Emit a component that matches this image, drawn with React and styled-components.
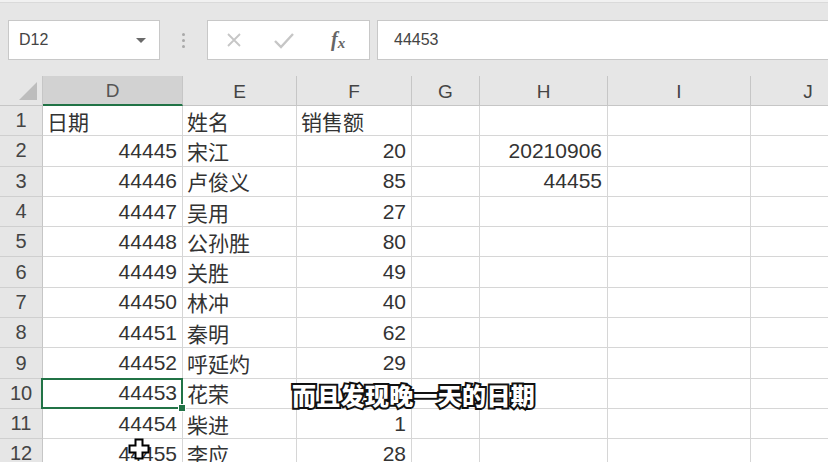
import styled, { createGlobalStyle, css } from "styled-components";

const GlobalStyle = createGlobalStyle`
  html, body {
    margin: 0;
    padding: 0;
    background: #ffffff;
  }
  body {
    font-family: "Liberation Sans", "Noto Sans CJK SC", sans-serif;
    overflow: hidden;
  }
`;

const GREEN = "#217346";
const GRID = "#d6d6d6";

const Page = styled.div`
  width: 828px;
  height: 470px;
  display: flex;
  flex-direction: column;
  background: #ffffff;
  overflow: hidden;
`;

const Toolbar = styled.div`
  height: 76px;
  box-sizing: border-box;
  padding: 18px 0 0 8px;
  display: flex;
  align-items: flex-start;
  background: #e6e6e6;
  border-top: 2px solid #f1f1f1;
  box-shadow: inset 0 1px 0 #dadada;
`;

const NameBox = styled.div`
  width: 152px;
  height: 40px;
  box-sizing: border-box;
  background: #fff;
  border: 1px solid #c8c8c8;
  display: flex;
  align-items: center;
  justify-content: space-between;
  padding: 0 13px 0 10px;
  font-size: 16px;
  color: #444;
`;

const Caret = styled.span`
  width: 0;
  height: 0;
  border-left: 5px solid transparent;
  border-right: 5px solid transparent;
  border-top: 5px solid #6a6a6a;
`;

const Grip = styled.div`
  width: 47px;
  height: 40px;
  display: flex;
  flex-direction: column;
  align-items: center;
  justify-content: center;
  gap: 3px;

  span {
    width: 3px;
    height: 3px;
    border-radius: 50%;
    background: #a9a9a9;
  }
`;

const FxButtons = styled.div`
  width: 163px;
  height: 40px;
  box-sizing: border-box;
  background: #fff;
  border: 1px solid #c8c8c8;
  display: flex;
  align-items: center;
  padding: 0 0 0 17px;
  gap: 30px;
  color: #c3c3c3;
`;

const FxLabel = styled.span`
  font-family: "Liberation Serif", serif;
  font-style: italic;
  font-weight: bold;
  font-size: 20px;
  color: #666;
  margin-left: 6px;

  sub {
    font-size: 15px;
    vertical-align: -2px;
  }
`;

const FormulaInput = styled.div`
  flex: 1;
  margin-left: 7px;
  height: 40px;
  box-sizing: border-box;
  background: #fff;
  border: 1px solid #c8c8c8;
  border-right: none;
  display: flex;
  align-items: center;
  padding-left: 16px;
  font-size: 16px;
  color: #444;
`;

const SheetWrap = styled.div`
  position: relative;
  height: 386px;
  overflow: hidden;
`;

const Sheet = styled.div`
  display: grid;
  grid-template-columns: 43px 140px 114px 115px 68px 128px 143px 115px;
  grid-template-rows: 30px repeat(12, 30.3px);
  font-size: 21px;
  color: #333;
`;

const Corner = styled.div`
  background: #e6e6e6;
  border-right: 1px solid #c6c6c6;
  border-bottom: 1px solid #c6c6c6;
  position: relative;

  &::after {
    content: "";
    position: absolute;
    right: 5px;
    bottom: 5px;
    width: 18px;
    height: 18px;
    background: #bdbdbd;
    clip-path: polygon(100% 0, 100% 100%, 0 100%);
  }
`;

const ColHead = styled.div`
  background: ${({ active }) => (active ? "#d2d2d2" : "#e6e6e6")};
  border-right: 1px solid #c6c6c6;
  border-bottom: ${({ active }) =>
    active ? `2px solid ${GREEN}` : "1px solid #c6c6c6"};
  display: flex;
  align-items: center;
  justify-content: center;
  font-size: 19px;
  color: ${({ active }) => (active ? "#555" : "#444")};
  padding-top: 2px;
  box-sizing: border-box;
`;

const RowHead = styled.div`
  background: #e6e6e6;
  border-right: 1px solid #c6c6c6;
  border-bottom: 1px solid #cfcfcf;
  display: flex;
  align-items: center;
  justify-content: center;
  font-size: 20px;
  color: #444;
  box-sizing: border-box;
`;

const Cell = styled.div`
  border-right: 1px solid ${GRID};
  border-bottom: 1px solid ${GRID};
  display: flex;
  align-items: center;
  justify-content: ${({ num }) => (num ? "flex-end" : "flex-start")};
  padding: ${({ num }) => (num ? "0 5px 0 0" : "0 0 0 4px")};
  box-sizing: border-box;
  white-space: nowrap;
  position: relative;

  ${({ selected }) =>
    selected &&
    css`
      &::after {
        content: "";
        position: absolute;
        left: -2px;
        top: -1px;
        right: -1px;
        bottom: -1px;
        border: 2px solid ${GREEN};
      }
      &::before {
        content: "";
        position: absolute;
        right: -4px;
        bottom: -4px;
        width: 6px;
        height: 6px;
        background: ${GREEN};
        border: 1px solid #fff;
        z-index: 2;
      }
    `}
`;

const Caption = styled.div`
  position: absolute;
  left: 292px;
  top: 305px;
  font-family: "Noto Sans CJK SC", sans-serif;
  font-weight: 900;
  font-size: 24px;
  line-height: 28px;
  letter-spacing: 0.3px;
  color: #fff;
  -webkit-text-stroke: 4px #111;
  paint-order: stroke fill;
`;

const Cursor = styled.svg`
  position: absolute;
  left: 128px;
  top: 362px;
`;

const columns = ["D", "E", "F", "G", "H", "I", "J"];

const rows = [
  ["日期", "姓名", "销售额", "", "", "", ""],
  [44445, "宋江", 20, "", 20210906, "", ""],
  [44446, "卢俊义", 85, "", 44455, "", ""],
  [44447, "吴用", 27, "", "", "", ""],
  [44448, "公孙胜", 80, "", "", "", ""],
  [44449, "关胜", 49, "", "", "", ""],
  [44450, "林冲", 40, "", "", "", ""],
  [44451, "秦明", 62, "", "", "", ""],
  [44452, "呼延灼", 29, "", "", "", ""],
  [44453, "花荣", "", "", "", "", ""],
  [44454, "柴进", 1, "", "", "", ""],
  [44455, "李应", 28, "", "", "", ""],
];

export default function App() {
  return (
    <Page>
      <GlobalStyle />
      <Toolbar>
        <NameBox>
          D12
          <Caret />
        </NameBox>
        <Grip>
          <span />
          <span />
          <span />
        </Grip>
        <FxButtons>
          <svg width="18" height="18" viewBox="0 0 18 18">
            <path d="M3 3 L15 15 M15 3 L3 15" stroke="#c6c6c6" strokeWidth="1.8" fill="none" />
          </svg>
          <svg width="22" height="18" viewBox="0 0 22 18">
            <path d="M2 10 L8 16 L20 3" stroke="#c6c6c6" strokeWidth="2.4" fill="none" />
          </svg>
          <FxLabel>
            f<sub>x</sub>
          </FxLabel>
        </FxButtons>
        <FormulaInput>44453</FormulaInput>
      </Toolbar>
      <SheetWrap>
        <Sheet>
          <Corner />
          {columns.map((c) => (
            <ColHead key={c} active={c === "D"}>
              {c}
            </ColHead>
          ))}
          {rows.map((row, r) => [
            <RowHead key={`h${r}`}>{r + 1}</RowHead>,
            ...row.map((v, c) => (
              <Cell
                key={`${r}-${c}`}
                num={typeof v === "number"}
                selected={r === 9 && c === 0}
              >
                {v}
              </Cell>
            )),
          ])}
        </Sheet>
        <Caption>而且发现晚一天的日期</Caption>
        <Cursor width="22" height="22" viewBox="0 0 22 22">
          <path
            d="M7.5 1.5 H14.5 V7.5 H20.5 V14.5 H14.5 V20.5 H7.5 V14.5 H1.5 V7.5 H7.5 Z"
            fill="#fff"
            stroke="#000"
            strokeWidth="2"
          />
        </Cursor>
      </SheetWrap>
    </Page>
  );
}
